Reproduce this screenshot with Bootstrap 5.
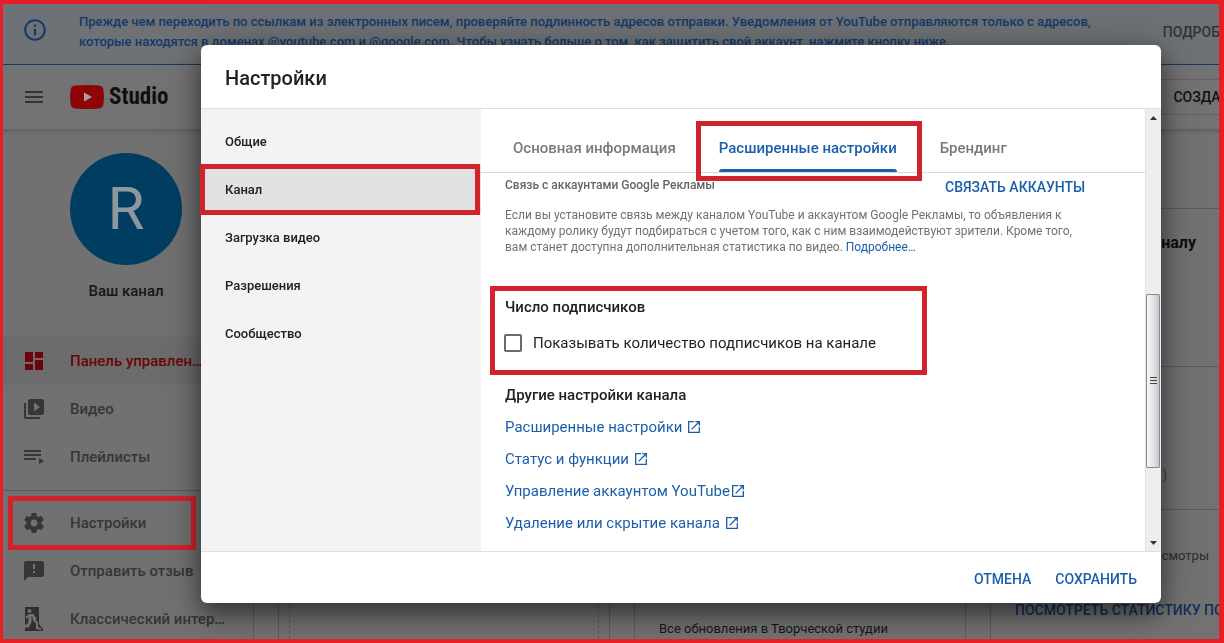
<!DOCTYPE html>
<html lang="ru">
<head>
<meta charset="utf-8">
<meta name="viewport" content="width=device-width, initial-scale=1">
<title>YouTube Studio — Настройки</title>
<link href="https://cdn.jsdelivr.net/npm/bootstrap@5.3.0/dist/css/bootstrap.min.css" rel="stylesheet">
<style>
  :root { --frame: #d2232d; --accent: #1b5fab; }
  body { font-family: Roboto, "Liberation Sans", sans-serif; font-size: 15px; line-height: 20px; color: #222; background: #727272; }
  a { text-decoration: none; }
  button { background: none; border: 0; padding: 0; }
  svg { flex: none; display: block; }
  .medium { font-weight: 500; }
  .caps { font-size: 14px; font-weight: 500; white-space: nowrap; }

  /* Page behind the dialog */
  .app { height: 100vh; overflow: hidden; }
  .notice { background: #6e7175; border-bottom: 1px solid #1b3c5e; color: #143a6b; padding: 12px 0 12px 22px; }
  .notice p { font-size: 13px; margin: 0 72px 0 31px; flex: none; }
  .notice .caps { color: #333; }
  .topbar { background: #737373; height: 65px; padding-left: 22px; border-bottom: 1px solid #646464; box-shadow: 0 1px 4px rgba(0,0,0,.2); z-index: 1; }
  .logo-word { font-family: "Liberation Sans Narrow", "Roboto Condensed", sans-serif; font-weight: 700; font-size: 23px; color: #101010; margin-left: 5px; }
  .create { margin-left: 968px; height: 36px; border: 1px solid #626262; padding: 0 20px 0 36px; color: #111; }
  .side { width: 254px; flex: none; border-right: 1px solid #5c5c5c; background: #717171; }
  .avatar { width: 112px; height: 112px; margin: 23px 0 16px 70px; background: #003e61; color: #8d979c; font-size: 60px; }
  .side-name { width: 112px; margin-left: 70px; color: #161616; margin-bottom: 36px; }
  .side a { height: 48px; padding: 0 24px 0 22px; gap: 24px; color: #363636; position: relative; }
  .side a.current { color: #6b0509; background: #6c6c6c; }
  .side a span { white-space: nowrap; }
  .side-lower { margin-top: 9px; padding-top: 8px; border-top: 1px solid #5a5a5a; }
  .board { padding-left: 24px; gap: 24px; }
  .tile { width: 332px; flex: none; border: 1px solid #5b5b5b; margin-top: 78px; height: 600px; }
  .tile-dashed { border: 1px dashed #585858; margin: 10px; height: 560px; }
  .news { margin: 410px 0 0 24px; font-size: 13px; color: #161616; }
  .stat { border-bottom: 1px solid #5b5b5b; padding: 24px; font-size: 12px; color: #2d2d2d; }
  .stat-top { height: 158px; }
  .stat-mid { height: 143px; }
  .stat-top div { width: 181px; font-size: 16px; color: #0d0d0d; }
  .stat-mid div { width: 152px; }
  .stat-low { padding: 36px 24px; font-size: 13px; color: #2d2d2d; }
  .stat-low div { width: 194px; margin-bottom: 34px; }
  .stat-low a { color: #122d59; }

  /* Dialog */
  .overlay { position: fixed; inset: 0; padding: 45px 63px 40px 201px; z-index: 10; }
  .dialog { background: #fff; border-radius: 6px; box-shadow: 0 10px 24px rgba(0,0,0,.5), 0 4px 50px rgba(0,0,0,.2); }
  .dialog-head { height: 64px; padding: 2px 24px 0; border-bottom: 1px solid #dfdfdf; }
  .dialog-head h1 { font-size: 20px; margin: 0; font-weight: 500; line-height: 24px; }
  .dialog-nav { width: 280px; flex: none; background: #f3f3f4; padding-top: 8px; }
  .dialog-nav a { height: 48px; padding: 2px 0 0 24px; color: #212121; font-size: 13px; position: relative; }
  .dialog-nav a.current { background: #e1e1e3; }
  .tabs { height: 64px; border-bottom: 1px solid #dadada; padding-left: 32px; gap: 43px; }
  .tabs button { color: #7a7a7a; height: 63px; padding-top: 14px; position: relative; white-space: nowrap; }
  .tabs button.current { color: var(--accent); }
  .tabs button.current::after { content: ""; position: absolute; left: 0; right: 0; bottom: 0; height: 3px; background: var(--accent); border-radius: 3px 3px 0 0; }
  .pane { padding: 4px 24px 0; }
  .link-c, .link-c:hover { color: var(--accent); }
  .pane .account { font-size: 12px; line-height: 16px; color: #666; width: 440px; }
  .desc { font-size: 12px; line-height: 16px; color: #717171; margin: 10px 0 42px; white-space: nowrap; }
  .subs { position: relative; margin-bottom: 32px; }
  .subs label { margin-top: 16px; }
  .form-check-input.box { width: 18px; height: 18px; margin: 0 11px 0 -1px; border: 2px solid #6a6a6a; border-radius: 2px; flex: none; }
  .links { margin: 12px 0 0; gap: 12px; }
  .links a { gap: 4px; }
  .dialog-foot { height: 52px; padding: 2px 24px 0; gap: 24px; border-top: 1px solid #dfdfdf; }
  h2 { font-size: 15px; line-height: 20px; font-weight: 500; margin: 0; }

  .bar { width: 16px; flex: none; background: #eeeef1; border-left: 1px solid #e2e2e4; }
  .bar-cap { height: 17px; }
  .thumb { height: 174px; margin: 168px 1px auto 0; border: 1px solid #8b8b8f; border-radius: 1px; background: linear-gradient(90deg, #f6f6f6, #e4e4e8 50%, #c8c8cf); }

  /* Red frames drawn over the parts to look at */
  .frame { position: absolute; border: 5px solid var(--frame); pointer-events: none; z-index: 2; }
  .frame-side { inset: -3px 57px -3px 8px; }
  .frame-nav { inset: -1px 1px -2px -1px; }
  .frame-tab { inset: 12px -25px -9px -23px; }
  .frame-subs { inset: -11px 194px -22px -15px; }
  .page-frame { position: fixed; inset: 0; border: solid #e61e26; border-width: 4px 5px 4px 3px; z-index: 20; pointer-events: none; }
</style>
</head>
<body>
<svg class="d-none"><symbol id="ext" viewBox="0 0 24 24"><path d="M19 19H5V5h7V3H3v18h18v-9h-2v7zM14 3v2h3.590l-9.830 9.830 1.410 1.410L19 6.410V10h2V3h-7z"/></symbol></svg>
<div class="app d-flex flex-column">
  <header class="notice d-flex align-items-center">
    <svg class="mb-1" width="26" height="26" viewBox="0 0 24 24" fill="currentColor"><path d="M11 17h2v-6h-2v6zm1-15C6.480 2 2 6.480 2 12s4.480 10 10 10 10-4.480 10-10S17.520 2 12 2zm0 18c-4.410 0-8-3.590-8-8s3.590-8 8-8 8 3.590 8 8-3.590 8-8 8zM11 9h2V7h-2v2z"/></svg>
    <p class="medium">Прежде чем переходить по ссылкам из электронных писем, проверяйте подлинность адресов отправки. Уведомления от YouTube отправляются только с адресов,<br>которые находятся в доменах @youtube.com и @google.com. Чтобы узнать больше о том, как защитить свой аккаунт, нажмите кнопку ниже.</p>
    <button type="button" class="caps">ПОДРОБНЕЕ</button>
  </header>
  <div class="topbar d-flex align-items-center flex-shrink-0">
    <button type="button" aria-label="Меню"><svg width="24" height="24" viewBox="0 0 24 24" fill="#333"><path d="M3 18h18v-2H3zm0-5h18v-2H3zm0-7v2h18V6z"/></svg></button>
    <a href="#" class="d-flex align-items-center ms-4">
      <svg width="34" height="24" viewBox="0 0 34 24"><path d="M5 .6Q17-.4 29 .6 33 1 33.400 5 34.400 12 33.400 19 33 23 29 23.400 17 24.400 5 23.400 1 23 .6 19-.4 12 .6 5 1 1 5 .6z" fill="#8e0508"/><path d="M14 7.500v9l8-4.500z" fill="#a8a0a0"/></svg>
      <span class="logo-word">Studio</span>
    </a>
    <button type="button" class="create caps">СОЗДАТЬ</button>
  </div>
  <div class="d-flex flex-grow-1 overflow-hidden">
    <nav class="side">
      <div class="avatar rounded-circle d-flex align-items-center justify-content-center">R</div>
      <div class="side-name text-center medium">Ваш канал</div>
      <a href="#" class="current d-flex align-items-center medium">
        <svg width="24" height="24" viewBox="0 0 24 24" fill="currentColor"><path d="M3 13h8V3H3v10zm0 8h8v-6H3v6zm10 0h8V11h-8v10zm0-18v6h8V3h-8z"/></svg><span>Панель управлен…</span></a>
      <a href="#" class="d-flex align-items-center medium">
        <svg width="24" height="24" viewBox="0 0 24 24" fill="currentColor"><path d="M4 6H2v14c0 1.100.9 2 2 2h14v-2H4V6zm16-4H8c-1.100 0-2 .9-2 2v12c0 1.100.9 2 2 2h12c1.100 0 2-.9 2-2V4c0-1.100-.9-2-2-2zm-8 12.500v-9l6 4.500-6 4.500z"/></svg><span>Видео</span></a>
      <a href="#" class="d-flex align-items-center medium">
        <svg width="24" height="24" viewBox="0 0 24 24" fill="currentColor"><path d="M2 5h17v2H2zM2 9h17v2H2zM2 13h12v2H2zM17 13l5 3-5 3z"/></svg><span>Плейлисты</span></a>
      <div class="side-lower">
        <a href="#" class="d-flex align-items-center medium">
          <svg width="24" height="24" viewBox="0 0 24 24" fill="currentColor"><path d="M19.430 12.980c.04-.32.07-.64.07-.98s-.03-.66-.07-.98l2.110-1.650c.19-.15.24-.42.12-.64l-2-3.460c-.12-.22-.39-.3-.61-.22l-2.490 1c-.52-.4-1.080-.73-1.690-.98l-.38-2.650C14.460 2.180 14.250 2 14 2h-4c-.25 0-.46.18-.49.42l-.38 2.650c-.61.25-1.170.59-1.690.98l-2.490-1c-.23-.09-.49 0-.61.22l-2 3.460c-.13.22-.07.49.12.64l2.110 1.650c-.04.32-.07.65-.07.98s.03.66.07.98l-2.110 1.650c-.19.15-.24.42-.12.64l2 3.460c.12.22.39.3.61.22l2.490-1c.52.4 1.080.73 1.690.98l.38 2.650c.03.24.24.42.49.42h4c.25 0 .46-.18.49-.42l.38-2.650c.61-.25 1.170-.59 1.690-.98l2.490 1c.23.09.49 0 .61-.22l2-3.460c.12-.22.07-.49-.12-.64l-2.110-1.650zM12 15.500c-1.930 0-3.500-1.570-3.500-3.500s1.570-3.500 3.500-3.500 3.500 1.570 3.500 3.500-1.570 3.500-3.500 3.500z"/></svg><span>Настройки</span><i class="frame frame-side"></i></a>
        <a href="#" class="d-flex align-items-center medium">
          <svg width="24" height="24" viewBox="0 0 24 24" fill="currentColor"><path d="M20 2H4c-1.100 0-2 .9-2 2v18l4-4h14c1.100 0 2-.9 2-2V4c0-1.100-.9-2-2-2zm-7 12h-2v-2h2v2zm0-4h-2V5h2v5z"/></svg><span>Отправить отзыв</span></a>
        <a href="#" class="d-flex align-items-center medium">
          <svg width="24" height="24" viewBox="0 0 24 24"><path d="M3 0h14v17l4 5v2H3z" fill="#2f2f2f"/><circle cx="7.500" cy="4" r="2" fill="#747474"/><path d="M7 8l4 0 1 5 3 3v5l4 1M7 8 4 11M11 9l3 3" fill="none" stroke="#747474" stroke-width="2"/><path d="M8 9v6l-2 4H2" fill="none" stroke="#747474" stroke-width="3"/></svg><span>Классический интер…</span></a>
      </div>
    </nav>
    <main class="board d-flex">
      <section class="tile"><div class="tile-dashed"></div></section>
      <section class="tile d-flex flex-column"><div class="news">Все обновления в Творческой студии</div></section>
      <section class="tile">
        <div class="stat stat-top"><div class="fw-bold text-end">каналу</div></div>
        <div class="stat stat-mid d-flex align-items-end"><div class="text-end">)</div></div>
        <div class="stat-low"><div class="text-end">Просмотры</div>
        <a href="#" class="caps">ПОСМОТРЕТЬ СТАТИСТИКУ ПО</a></div>
      </section>
    </main>
  </div>
</div>

<div class="overlay d-flex">
  <div class="dialog d-flex flex-column flex-grow-1" role="dialog" aria-labelledby="dlg-title">
    <div class="dialog-head d-flex align-items-center"><h1 id="dlg-title">Настройки</h1></div>
    <div class="d-flex flex-grow-1">
      <nav class="dialog-nav">
        <a href="#" class="d-flex align-items-center medium">Общие</a>
        <a href="#" class="current d-flex align-items-center medium">Канал<i class="frame frame-nav"></i></a>
        <a href="#" class="d-flex align-items-center medium">Загрузка видео</a>
        <a href="#" class="d-flex align-items-center medium">Разрешения</a>
        <a href="#" class="d-flex align-items-center medium">Сообщество</a>
      </nav>
      <div class="flex-grow-1">
        <div class="tabs d-flex">
          <button type="button" class="medium">Основная информация</button>
          <button type="button" class="current medium">Расширенные настройки<i class="frame frame-tab"></i></button>
          <button type="button" class="medium">Брендинг</button>
        </div>
        <div class="pane">
          <div class="d-flex">
            <h2 class="account">Связь с аккаунтами Google Рекламы</h2>
            <button type="button" class="link-c caps">СВЯЗАТЬ АККАУНТЫ</button>
          </div>
          <p class="desc">Если вы установите связь между каналом YouTube и аккаунтом Google Рекламы, то объявления к<br>каждому ролику будут подбираться с учетом того, как с ним взаимодействуют зрители. Кроме того,<br>вам станет доступна дополнительная статистика по видео. <a href="#" class="link-c">Подробнее…</a></p>
          <div class="subs">
            <h2>Число подписчиков</h2>
            <label class="d-flex align-items-center"><input class="form-check-input box" type="checkbox">Показывать количество подписчиков на канале</label>
            <i class="frame frame-subs"></i>
          </div>
          <h2>Другие настройки канала</h2>
          <div class="links d-flex flex-column align-items-start">
            <a href="#" class="link-c d-flex align-items-center">Расширенные настройки<svg width="16" height="16" fill="currentColor"><use href="#ext"/></svg></a>
            <a href="#" class="link-c d-flex align-items-center">Статус и функции<svg width="16" height="16" fill="currentColor"><use href="#ext"/></svg></a>
            <a href="#" class="link-c d-flex align-items-center gap-0">Управление аккаунтом YouTube<svg width="16" height="16" fill="currentColor"><use href="#ext"/></svg></a>
            <a href="#" class="link-c d-flex align-items-center">Удаление или скрытие канала<svg width="16" height="16" fill="currentColor"><use href="#ext"/></svg></a>
          </div>
        </div>
      </div>
      <div class="bar d-flex flex-column">
        <div class="bar-cap d-flex align-items-center justify-content-center"><svg width="7" height="4"><path d="M0 4 3.500 0 7 4z" fill="#333"/></svg></div>
        <div class="thumb d-flex align-items-center justify-content-center"><svg width="7" height="8"><path d="M0 .5h7M0 3.500h7M0 6.500h7" stroke="#444"/></svg></div>
        <div class="bar-cap d-flex align-items-center justify-content-center"><svg width="7" height="4"><path d="M0 0h7L3.500 4z" fill="#333"/></svg></div>
      </div>
    </div>
    <div class="dialog-foot d-flex align-items-center justify-content-end">
      <button type="button" class="link-c caps">ОТМЕНА</button>
      <button type="button" class="link-c caps">СОХРАНИТЬ</button>
    </div>
  </div>
</div>
<div class="page-frame"></div>
<script src="https://cdn.jsdelivr.net/npm/bootstrap@5.3.0/dist/js/bootstrap.bundle.min.js"></script>
</body>
</html>
